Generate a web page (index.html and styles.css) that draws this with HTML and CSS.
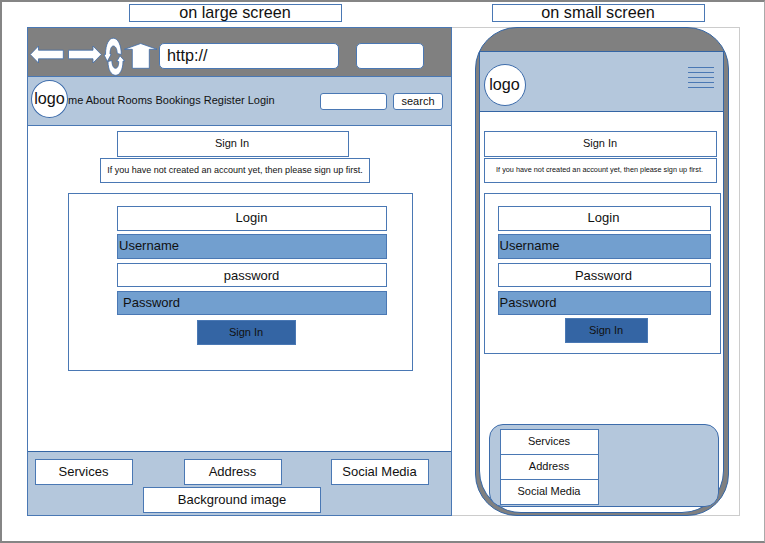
FILE: index.html
```html
<!DOCTYPE html>
<html lang="en">
<head>
<meta charset="utf-8">
<title>Sign in wireframe</title>
<link rel="stylesheet" href="styles.css">
</head>
<body>
<div class="sheet">
  <div class="titles">
    <div class="box title">on large screen</div>
    <div class="box title">on small screen</div>
  </div>
  <div class="frame">
    <section class="browser">
      <div class="chrome">
        <svg class="tools" width="132" height="48" viewBox="28 28 132 48">
          <path d="M30.3 54.5L38.5 46V50.2H63.3V58.8H38.5V63Z"/>
          <path d="M101.3 54.5L93 46V50.2H68.5V58.8H93V63Z"/>
          <path d="M105.5 54.5C105.5 44 109 38.2 113.3 38.2C118 38.2 121.3 45 121.3 54.5L117.3 53.5C117 48.5 115.3 46 113.3 46C111.3 46 110 49.5 110 54L111.2 54.3L107.3 61.5L104 54.8Z"/>
          <path d="M123 61C123 70 119.6 75.3 115.7 75.3C111 75.3 108 69.5 108 61.5L111.8 60.5C112 65.5 113.6 68.3 115.5 68.3C117.6 68.3 118.8 65.5 118.7 61.5L116.7 61.5L120 55.8L124.7 61Z"/>
          <path d="M140.7 43.5L157 49.3H149.3V68.3H132.3V49.3H124.5Z"/>
        </svg>
        <div class="box url">http://</div>
        <div class="box extra"></div>
      </div>
      <nav class="nav">
        <div class="logo">logo</div>
        <div class="links">me About Rooms Bookings Register Login</div>
        <div class="box query"></div>
        <div class="box search">search</div>
      </nav>
      <main class="content">
        <div class="box heading">Sign In</div>
        <div class="box hint">If you have not created an account yet, then please sign up first.</div>
        <div class="box form">
          <div class="box row">Login</div>
          <div class="box row field">Username</div>
          <div class="box row">password</div>
          <div class="box row field shifted">Password</div>
          <div class="box button">Sign In</div>
        </div>
      </main>
      <footer class="footer">
        <div class="footer-row">
          <div class="box">Services</div>
          <div class="box">Address</div>
          <div class="box">Social Media</div>
        </div>
        <div class="box background">Background image</div>
      </footer>
    </section>
    <section class="phone">
      <div class="screen">
        <header class="topbar">
          <div class="logo">logo</div>
          <div class="menu"><i></i><i></i><i></i><i></i><i></i></div>
        </header>
        <main class="content">
          <div class="box heading">Sign In</div>
          <div class="box hint">If you have not created an account yet, then please sign up first.</div>
          <div class="box form">
            <div class="box row">Login</div>
            <div class="box row field">Username</div>
            <div class="box row">Password</div>
            <div class="box row field">Password</div>
            <div class="box button">Sign In</div>
          </div>
        </main>
        <footer class="footer">
          <div class="box">Services</div>
          <div class="box">Address</div>
          <div class="box">Social Media</div>
        </footer>
      </div>
    </section>
  </div>
</div>
</body>
</html>
```
FILE: styles.css
```css
* { box-sizing: border-box; }
body {
  margin: 0;
  background: #fff;
  color: #111;
  font: 13px/1 "Liberation Sans", Arial, sans-serif;
  white-space: nowrap;
  overflow: hidden;
}
.sheet {
  width: 765px;
  height: 543px;
  border: 2px solid #858585;
  border-right: 1px solid #aaa;
}
.titles {
  display: flex;
  gap: 150px;
  height: 25px;
  padding: 2px 0 0 127px;
}
.box {
  display: flex;
  flex: none;
  align-items: center;
  justify-content: center;
  padding: 0 1px 2px 0;
  background: #fff;
  border: 1px solid #4a78b4;
}
.title {
  width: 213px;
  height: 18px;
  font-size: 16.2px;
}
.frame {
  display: flex;
  width: 713px;
  height: 489px;
  margin-left: 25px;
  border: 1px solid #ccc;
}
.browser {
  display: flex;
  flex-direction: column;
  flex: none;
  width: 425px;
  height: 489px;
  margin: -1px 0 0 -1px;
  border: 1px solid #4a78b4;
}
.chrome {
  display: flex;
  align-items: center;
  height: 48px;
  background: #808080;
}
.tools {
  display: block;
  flex: none;
  fill: #fff;
  stroke: #3d6cab;
  stroke-width: 0.8;
}
.url, .extra {
  height: 26px;
  margin-top: 8px;
  border-radius: 5px;
}
.url {
  width: 180px;
  margin-left: -1px;
  padding-left: 7px;
  justify-content: flex-start;
  font-size: 16.2px;
}
.extra { width: 68px; margin-left: 17px; }
.nav {
  display: flex;
  align-items: center;
  height: 50px;
  padding-left: 3px;
  background: #b4c7dc;
  border: solid #4a78b4;
  border-width: 1px 0;
  font-size: 11px;
}
.links {
  width: 206px;
  padding-bottom: 2px;
  text-align: right;
}
.logo {
  display: flex;
  align-items: center;
  justify-content: center;
  flex: none;
  padding-bottom: 1px;
  background: #fff;
  border: 1px solid #3d6cab;
  border-radius: 50%;
  font-size: 16.2px;
}
.nav .logo {
  width: 37px;
  height: 38px;
  margin-top: -5px;
}
.query, .search { height: 17px; border-radius: 3px; }
.query { width: 67px; margin-left: 46px; }
.search { width: 50px; margin-left: 6px; padding: 0; }
.content {
  display: flex;
  flex-direction: column;
  align-items: flex-start;
}
.browser .content { height: 325px; padding-top: 5px; }
.heading { height: 26px; font-size: 11px; }
.browser .heading { width: 232px; margin-left: 89px; padding-right: 2px; }
.hint { height: 25px; margin-top: 1px; }
.browser .hint {
  width: 270px;
  margin-left: 72px;
  padding: 0;
  font-size: 9.02px;
}
.form {
  flex-direction: column;
  justify-content: flex-start;
  margin-top: 10px;
  padding: 12px 0 0;
}
.browser .form {
  width: 345px;
  height: 178px;
  margin-left: 40px;
  align-items: flex-start;
}
.row { height: 25px; margin-bottom: 3px; }
.row:nth-child(2) { margin-bottom: 4px; }
.row:nth-child(3) { height: 24px; margin-bottom: 4px; padding-bottom: 0; }
.row:nth-child(4) { height: 24px; }
.browser .row { width: 270px; margin-left: 48px; }
.field {
  justify-content: flex-start;
  padding: 0 0 2px 1px;
  background: #729fcf;
}
.browser .shifted { padding-left: 5px; }
.button {
  height: 25px;
  padding: 0 1px 0 0;
  background: #3465a4;
  font-size: 11px;
}
.browser .button { width: 99px; margin: 2px 0 0 128px; }
.browser .footer {
  height: 64px;
  padding-top: 7px;
  background: #b4c7dc;
  border-top: 1px solid #3465a4;
}
.footer-row { display: flex; padding-left: 7px; }
.footer-row .box { width: 98px; height: 26px; margin-right: 51px; }
.footer-row .box + .box { margin-right: 49px; }
.browser .background {
  width: 178px;
  height: 26px;
  margin: 2px 0 0 115px;
  padding-right: 0;
}

.phone {
  flex: none;
  width: 254px;
  height: 489px;
  margin: -1px 0 0 23px;
  padding: 23px 0 0 3px;
  background: #808080;
  border: 1px solid #3465a4;
  border-radius: 42px;
}
.screen {
  width: 245px;
  height: 462px;
  background: #fff;
  border: 1px solid #3465a4;
  border-top: 0;
  border-radius: 0 0 42px 42px;
}
.topbar {
  display: flex;
  justify-content: space-between;
  width: 245px;
  height: 61px;
  margin-left: -1px;
  padding: 12px 9px 0 4px;
  background: #b4c7dc;
  border: 1px solid #3465a4;
}
.topbar .logo { width: 42px; height: 42px; padding: 0 1px 1px 0; }
.menu {
  display: flex;
  flex-direction: column;
  gap: 4px;
  padding-top: 3px;
}
.menu i { display: block; width: 26px; height: 1px; background: #4a78b4; }
.screen .content { height: 312px; padding: 19px 0 0 4px; }
.screen .heading, .screen .hint { width: 233px; }
.screen .hint { padding: 0 2px 1px 0; font-size: 7.3px; }
.screen .form { width: 237px; height: 161px; }
.screen .row { width: 213px; margin-left: 3px; }
.screen .button { width: 83px; margin-left: 8px; }
.screen .footer {
  width: 230px;
  height: 83px;
  margin-left: 9px;
  padding: 4px 0 0 10px;
  background: #b4c7dc;
  border: 1px solid #3d6cab;
  border-radius: 14px;
  font-size: 11px;
}
.screen .footer .box { width: 99px; height: 26px; margin-bottom: -1px; }
```
